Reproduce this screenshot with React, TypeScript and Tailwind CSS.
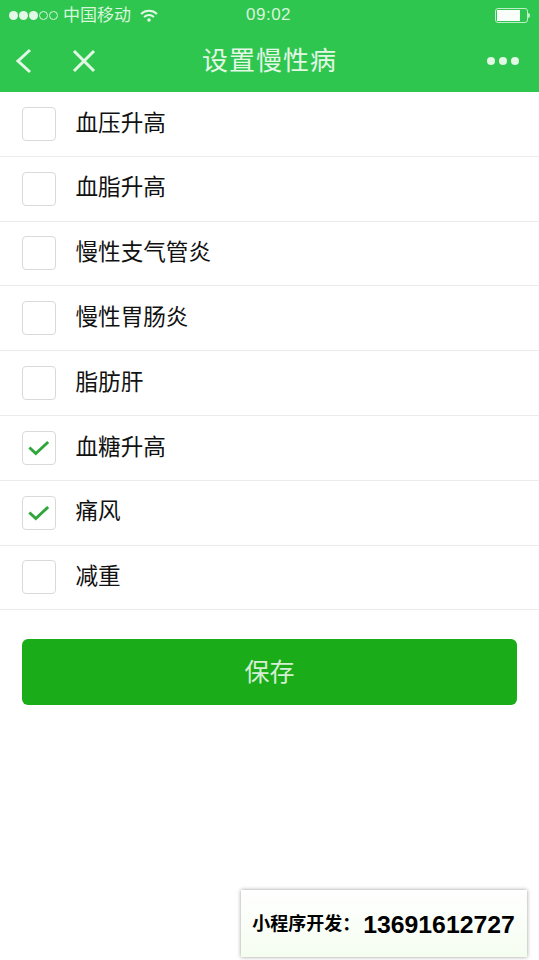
const items = [
  { name: "血压升高", checked: false },
  { name: "血脂升高", checked: false },
  { name: "慢性支气管炎", checked: false },
  { name: "慢性胃肠炎", checked: false },
  { name: "脂肪肝", checked: false },
  { name: "血糖升高", checked: true },
  { name: "痛风", checked: true },
  { name: "减重", checked: false },
];

function StatusBar() {
  return (
    <div className="relative flex h-[31px] items-center pl-[9px] pr-[9px] text-[17px] text-[#d8f5dc]">
      <div className="flex items-center gap-[1px]">
        <span className="h-[9px] w-[9px] rounded-full bg-[#e4f8e7]" />
        <span className="h-[9px] w-[9px] rounded-full bg-[#e4f8e7]" />
        <span className="h-[9px] w-[9px] rounded-full bg-[#e4f8e7]" />
        <span className="h-[9px] w-[9px] rounded-full border border-[#d8f5dc]" />
        <span className="h-[9px] w-[9px] rounded-full border border-[#d8f5dc]" />
      </div>
      <span className="ml-[5px] leading-none">中国移动</span>
      <svg className="ml-[9px] h-[14px] w-[18px]" viewBox="0 0 18 14" fill="none" stroke="#e4f8e7" strokeWidth="2">
        <path d="M1 5 C5.5 0.8 12.5 0.8 17 5" />
        <path d="M4 8 C7 5.5 11 5.5 14 8" />
        <circle cx="9" cy="11" r="1.8" fill="#e4f8e7" stroke="none" />
      </svg>
      <span className="flex-1" />
      <div className="flex items-center">
        <div className="h-[15px] w-[33px] rounded-[3px] border border-[#bfeec8] p-[1px]">
          <div className="h-full w-[23px] bg-[#fafefa]" />
        </div>
        <div className="h-[5px] w-[2px] rounded-r-sm bg-[#bfeec8]" />
      </div>
      <span className="absolute left-[246px] top-[6px] text-[17px] leading-[18px] tracking-[0.5px]">09:02</span>
    </div>
  );
}

function NavBar() {
  return (
    <div className="flex h-[61px] items-center justify-between pb-[1px] pl-[15px] pr-[20px]">
      <div className="flex items-center gap-[39px]">
        <svg className="h-[26px] w-[18px]" viewBox="0 0 18 26" fill="none" stroke="#e2f8e5" strokeWidth="3">
          <path d="M15 2 L3 13 L15 24" />
        </svg>
        <svg className="h-[24px] w-[24px]" viewBox="0 0 24 24" fill="none" stroke="#e2f8e5" strokeWidth="3">
          <path d="M2 2 L22 22 M22 2 L2 22" />
        </svg>
      </div>
      <span className="absolute left-0 right-0 text-center text-[26px] tracking-[1px] text-[#e2f8e5]">设置慢性病</span>
      <div className="flex items-center gap-[4px]">
        <span className="h-[8px] w-[8px] rounded-full bg-[#e2f8e5]" />
        <span className="h-[8px] w-[8px] rounded-full bg-[#e2f8e5]" />
        <span className="h-[8px] w-[8px] rounded-full bg-[#e2f8e5]" />
      </div>
    </div>
  );
}

function Row({ name, checked }: { name: string; checked: boolean }) {
  return (
    <div className="flex h-[64.8px] items-center border-b border-[#ececec] pl-[22px]">
      <div className="flex h-[34px] w-[34px] items-center justify-center rounded-[4px] border-[1.5px] border-[#d9d9d9] bg-white">
        {checked && (
          <svg className="h-[17px] w-[22px]" viewBox="0 0 24 18" fill="none" stroke="#2fa63c" strokeWidth="3.2">
            <path d="M1.5 9 L8.5 15.5 L22 3" />
          </svg>
        )}
      </div>
      <span className="ml-[19.5px] text-[22.6px] leading-none text-[#111]">{name}</span>
    </div>
  );
}

export default function App() {
  return (
    <div
      className="relative h-[960px] w-[539px] overflow-hidden bg-white"
      style={{ fontFamily: '"Liberation Sans", "Noto Sans CJK SC", sans-serif' }}
    >
      <div className="bg-[#2fc64f]">
        <StatusBar />
        <NavBar />
      </div>
      <div>
        {items.map((item) => (
          <Row key={item.name} name={item.name} checked={item.checked} />
        ))}
      </div>
      <div className="mt-[29px] px-[22px]">
        <button className="flex h-[66px] w-full items-center justify-center rounded-[6px] bg-[#1aad19] text-[25px] text-[#d5efd5]">
          保存
        </button>
      </div>
      <div className="absolute left-[241px] top-[890px] flex h-[67px] w-[286px] items-center justify-center bg-gradient-to-b from-white to-[#f5fdf0] pt-[2px] pr-[1px] shadow-[0_0_4px_rgba(0,0,0,0.4)]">
        <span className="text-[18px] font-bold text-black">小程序开发：</span>
        <span className="ml-[3px] text-[24.8px] font-bold text-black">13691612727</span>
      </div>
    </div>
  );
}
